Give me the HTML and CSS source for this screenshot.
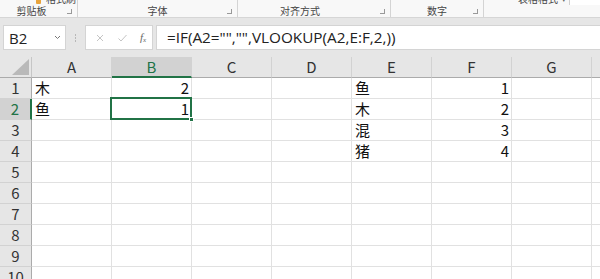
FILE: index.html
```html
<!DOCTYPE html>
<html>
<head>
	<title>Sheet1 - VLOOKUP</title>
	<link rel="stylesheet" href="styles.css">
</head>
<body>
	<div class="ribbon">
		<div class="ribbon-top">
			<span class="brush-icon"></span><span class="top-text">格式刷</span>
			<span class="top-text right-text">表格格式</span><span class="top-caret">▾</span><span class="top-box"></span>
		</div>
		<div class="groups">
			<div class="group g-clip"><span>剪贴板</span><i class="launcher"></i></div>
			<div class="group g-font"><span>字体</span><i class="launcher"></i></div>
			<div class="group g-align"><span>对齐方式</span><i class="launcher"></i></div>
			<div class="group g-num"><span>数字</span><i class="launcher"></i></div>
			<div class="group g-rest"></div>
		</div>
	</div>

	<div class="formula-row">
		<div class="name-box">
			<span>B2</span>
			<svg width="7" height="5" viewBox="0 0 7 5"><path d="M1 1 L3.5 3.5 L6 1" fill="none" stroke="#777" stroke-width="1"/></svg>
		</div>
		<div class="grip"><i></i><i></i><i></i></div>
		<div class="fx-box">
			<svg width="10" height="10" viewBox="0 0 10 10"><path d="M2 2 L8 8 M8 2 L2 8" stroke="#c4c4c4" stroke-width="1"/></svg>
			<svg width="11" height="10" viewBox="0 0 11 10"><path d="M1.5 5.5 L4 8 L9.5 2" fill="none" stroke="#c4c4c4" stroke-width="1"/></svg>
			<span class="fx">f<sub>x</sub></span>
		</div>
		<div class="formula-input">=IF(A2="","",VLOOKUP(A2,E:F,2,))</div>
	</div>

	<div class="sheet">
		<div class="corner"><span class="corner-tri"></span></div>
		<div class="col-head">A</div>
		<div class="col-head active">B</div>
		<div class="col-head">C</div>
		<div class="col-head">D</div>
		<div class="col-head">E</div>
		<div class="col-head">F</div>
		<div class="col-head">G</div>
		<div class="col-head last"></div>

		<div class="row-head">1</div>
		<div class="cell text">木</div>
		<div class="cell num">2</div>
		<div class="cell"></div>
		<div class="cell"></div>
		<div class="cell text">鱼</div>
		<div class="cell num">1</div>
		<div class="cell"></div>
		<div class="cell last"></div>

		<div class="row-head active">2</div>
		<div class="cell text">鱼</div>
		<div class="cell num selected">1<span class="handle"></span></div>
		<div class="cell"></div>
		<div class="cell"></div>
		<div class="cell text">木</div>
		<div class="cell num">2</div>
		<div class="cell"></div>
		<div class="cell last"></div>

		<div class="row-head">3</div>
		<div class="cell"></div>
		<div class="cell"></div>
		<div class="cell"></div>
		<div class="cell"></div>
		<div class="cell text">混</div>
		<div class="cell num">3</div>
		<div class="cell"></div>
		<div class="cell last"></div>

		<div class="row-head">4</div>
		<div class="cell"></div>
		<div class="cell"></div>
		<div class="cell"></div>
		<div class="cell"></div>
		<div class="cell text">猪</div>
		<div class="cell num">4</div>
		<div class="cell"></div>
		<div class="cell last"></div>

		<div class="row-head">5</div>
		<div class="cell"></div><div class="cell"></div><div class="cell"></div><div class="cell"></div>
		<div class="cell"></div><div class="cell"></div><div class="cell"></div><div class="cell last"></div>

		<div class="row-head">6</div>
		<div class="cell"></div><div class="cell"></div><div class="cell"></div><div class="cell"></div>
		<div class="cell"></div><div class="cell"></div><div class="cell"></div><div class="cell last"></div>

		<div class="row-head">7</div>
		<div class="cell"></div><div class="cell"></div><div class="cell"></div><div class="cell"></div>
		<div class="cell"></div><div class="cell"></div><div class="cell"></div><div class="cell last"></div>

		<div class="row-head">8</div>
		<div class="cell"></div><div class="cell"></div><div class="cell"></div><div class="cell"></div>
		<div class="cell"></div><div class="cell"></div><div class="cell"></div><div class="cell last"></div>

		<div class="row-head">9</div>
		<div class="cell"></div><div class="cell"></div><div class="cell"></div><div class="cell"></div>
		<div class="cell"></div><div class="cell"></div><div class="cell"></div><div class="cell last"></div>

		<div class="row-head">10</div>
		<div class="cell"></div><div class="cell"></div><div class="cell"></div><div class="cell"></div>
		<div class="cell"></div><div class="cell"></div><div class="cell"></div><div class="cell last"></div>
	</div>
</body>
</html>
```

FILE: styles.css
```css
body {
	margin: 0;
	padding: 0;
	width: 600px;
	height: 279px;
	overflow: hidden;
	background-color: #e6e6e6;
	font-family: "Noto Sans CJK SC", "Liberation Sans", sans-serif;
}
.ribbon {
	height: 17px;
	background-color: #f8f8f8;
	border-bottom: 1px solid #d6d6d6;
	position: relative;
	overflow: hidden;
}
.ribbon-top {
	position: absolute;
	top: -7px;
	left: 0;
	width: 600px;
	height: 12px;
	font-size: 10px;
	color: #444;
	display: flex;
	align-items: center;
	white-space: nowrap;
	overflow: hidden;
}
.ribbon-top > span {
	flex-shrink: 0;
}
.brush-icon {
	display: inline-block;
	width: 5px;
	height: 5px;
	margin-left: 36px;
	margin-top: 4px;
	background-color: #e8a33c;
	border-radius: 1px;
}
.top-text {
	margin-left: 5px;
	line-height: 12px;
}
.right-text {
	margin-left: 442px;
}
.top-caret {
	font-size: 7px;
	margin-left: 4px;
	color: #666;
}
.top-box {
	display: inline-block;
	width: 40px;
	height: 12px;
	margin-left: 3px;
	background-color: #fff;
	border: 1px solid #d0d0d0;
}
.groups {
	display: flex;
	height: 17px;
	font-size: 10px;
	color: #444;
}
.group {
	position: relative;
	border-right: 1px solid #d4d4d4;
	display: flex;
	align-items: flex-end;
	justify-content: center;
	padding-bottom: 1px;
	box-sizing: border-box;
	height: 17px;
	line-height: 10px;
}
.g-clip {
	width: 78px;
}
.g-font {
	width: 160px;
}
.g-align {
	width: 153px;
}
.g-num {
	width: 93px;
}
.g-rest {
	flex: 1;
	border-right: none;
}
.g-clip span {
	margin-right: 14px;
}
.g-align span {
	margin-right: 28px;
}
.launcher {
	position: absolute;
	right: 5px;
	bottom: 3px;
	width: 4px;
	height: 4px;
	border-right: 1px solid #999;
	border-bottom: 1px solid #999;
}
.formula-row {
	display: flex;
	align-items: stretch;
	height: 25px;
	margin-top: 7px;
	padding-left: 3px;
}
.name-box {
	width: 63px;
	background-color: #fff;
	box-sizing: border-box;
	border: 1px solid #d4d4d4;
	display: flex;
	align-items: center;
	justify-content: space-between;
	padding: 0 4px 0 5px;
	font-family: "Open Sans", "Liberation Sans", sans-serif;
	font-size: 15px;
	color: #222;
}
.grip {
	width: 19px;
	display: flex;
	flex-direction: column;
	align-items: center;
	justify-content: center;
	gap: 1px;
}
.grip i {
	display: block;
	width: 1px;
	height: 2px;
	background-color: #b8b8b8;
}
.fx-box {
	width: 68px;
	background-color: #fff;
	box-sizing: border-box;
	border: 1px solid #d4d4d4;
	display: flex;
	align-items: center;
	gap: 12px;
	padding-left: 9px;
}
.fx {
	font-family: "Liberation Serif", serif;
	font-style: italic;
	font-size: 11px;
	color: #666;
}
.fx sub {
	font-size: 7px;
	vertical-align: -1px;
}
.formula-input {
	flex: 1;
	margin-left: 3px;
	background-color: #fff;
	border: 1px solid #d4d4d4;
	border-right: none;
	padding-left: 10px;
	font-family: "Open Sans", "Liberation Sans", sans-serif;
	font-size: 15.3px;
	line-height: 23px;
	color: #222;
	white-space: nowrap;
}
.sheet {
	margin-top: 7px;
	display: grid;
	grid-template-columns: 32px repeat(7, 80px) 1fr;
	grid-template-rows: repeat(11, 21px);
	background-color: #fff;
}
.corner {
	position: relative;
	background-color: #e6e6e6;
	border-right: 1px solid #c6c6c6;
	border-bottom: 1px solid #ababab;
	box-sizing: border-box;
}
.corner-tri {
	position: absolute;
	right: 2px;
	bottom: 2px;
	width: 0;
	height: 0;
	border-left: 17px solid transparent;
	border-bottom: 16px solid #b9b9b9;
}
.col-head {
	background-color: #e6e6e6;
	border-right: 1px solid #d2d2d2;
	border-bottom: 1px solid #ababab;
	box-sizing: border-box;
	text-align: center;
	font-size: 15px;
	line-height: 20px;
	color: #333;
}
.col-head.active {
	background-color: #d2d2d2;
	color: #217346;
	border-bottom: 2px solid #217346;
}
.col-head.last {
	border-right: none;
}
.row-head {
	background-color: #e6e6e6;
	border-right: 1px solid #ababab;
	border-bottom: 1px solid #d2d2d2;
	box-sizing: border-box;
	text-align: center;
	font-size: 15px;
	line-height: 20px;
	color: #333;
}
.row-head.active {
	background-color: #d2d2d2;
	color: #217346;
	border-right: 2px solid #217346;
}
.cell {
	border-right: 1px solid #e1e1e1;
	border-bottom: 1px solid #e1e1e1;
	box-sizing: border-box;
	font-size: 15px;
	line-height: 20px;
	color: #111;
	padding: 0 2px 0 3px;
}
.cell.last {
	border-right: none;
}
.cell.text {
	font-size: 15px;
}
.cell.num {
	text-align: right;
	font-size: 15px;
}
.selected {
	position: relative;
}
.selected::after {
	content: "";
	position: absolute;
	left: -2px;
	top: -2px;
	right: -1px;
	bottom: -1px;
	border: 2px solid #217346;
}
.handle {
	position: absolute;
	right: -3px;
	bottom: -3px;
	width: 5px;
	height: 5px;
	background-color: #217346;
	border: 1px solid #fff;
	box-sizing: border-box;
	z-index: 1;
}
```
